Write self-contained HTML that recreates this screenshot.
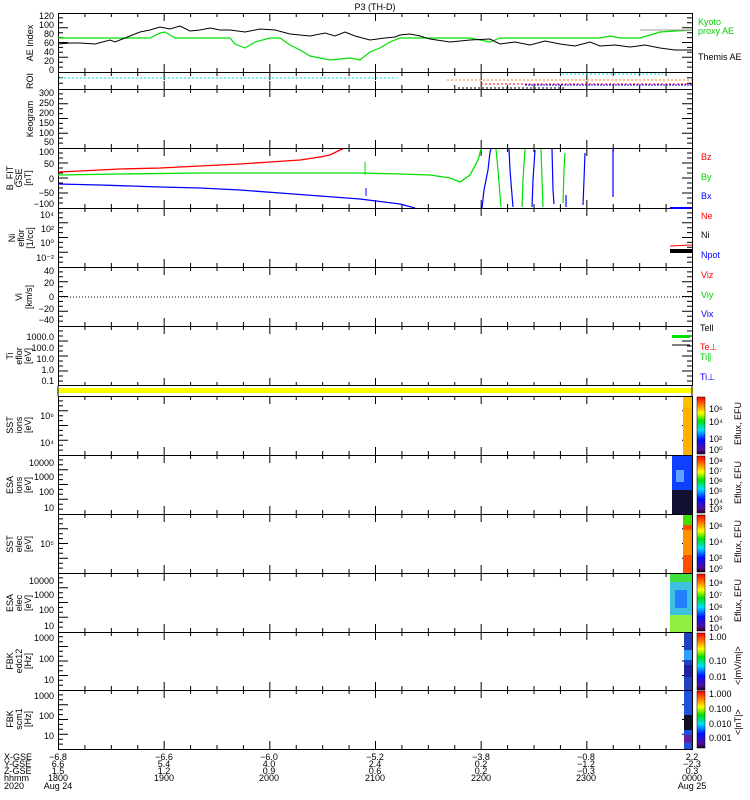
<!DOCTYPE html>
<html><head><meta charset="utf-8"><style>
html,body{margin:0;padding:0;background:#fff;width:750px;height:800px;overflow:hidden}
svg{display:block;font-family:"Liberation Sans",sans-serif}
text{font-size:9px}
</style></head><body>
<svg id="s" width="750" height="800" viewBox="0 0 750 800" xmlns="http://www.w3.org/2000/svg">
<defs>
<linearGradient id="cb" x1="0" y1="1" x2="0" y2="0">
<stop offset="0" stop-color="#200020"/><stop offset="0.08" stop-color="#5010a0"/><stop offset="0.25" stop-color="#0010ff"/><stop offset="0.42" stop-color="#00e0ff"/><stop offset="0.58" stop-color="#00e000"/><stop offset="0.72" stop-color="#ffff00"/><stop offset="0.85" stop-color="#ff8000"/><stop offset="1" stop-color="#ff0000"/>
</linearGradient>
</defs>
<text x="375" y="10" text-anchor="middle" font-size="10">P3 (TH-D)</text>
<g fill="none" stroke="#000" stroke-width="1" id="frames">
<rect x="58.5" y="13.5" width="634" height="59"/>
<rect x="58.5" y="72.5" width="634" height="17"/>
<rect x="58.5" y="89.5" width="634" height="59"/>
<rect x="58.5" y="148.5" width="634" height="60"/>
<rect x="58.5" y="208.5" width="634" height="59"/>
<rect x="58.5" y="267.5" width="634" height="59"/>
<rect x="58.5" y="326.5" width="634" height="59"/>
<rect x="58.5" y="396.5" width="634" height="59"/>
<rect x="58.5" y="455.5" width="634" height="59"/>
<rect x="58.5" y="514.5" width="634" height="59"/>
<rect x="58.5" y="573.5" width="634" height="59"/>
<rect x="58.5" y="632.5" width="634" height="58"/>
<rect x="58.5" y="690.5" width="634" height="59"/>
</g>
<rect x="58" y="388" width="635" height="5" fill="#ffff00"/>
<line x1="58" y1="386" x2="58" y2="396" stroke="#000"/><line x1="692" y1="386" x2="692" y2="396" stroke="#000"/>
<g id="ticks" stroke="#000"></g>
<!-- AE data -->
<polyline fill="none" stroke="#00e000" stroke-width="1.2" points="58,38 150,38 160,33 165,32 175,38 230,38 235,44 245,48 255,42 270,38 280,38 290,45 300,50 310,56 330,60 350,58 360,60 370,52 380,48 390,42 400,38 470,38 480,40 490,42 500,38 560,38 600,38 610,36 620,38 640,38 660,32 692,30"/>
<polyline fill="none" stroke="#000" stroke-width="1" points="58,44 70,43 80,43 95,44 110,40 115,42 125,38 140,32 150,30 160,27 170,29 180,26 190,31 200,30 210,28 220,30 230,30 245,32 260,29 275,30 290,34 300,35 310,36 325,33 335,36 345,32 355,36 370,40 385,38 395,37 400,35 410,34 420,36 430,39 450,42 470,40 490,39 500,44 515,42 530,45 545,41 560,44 575,46 590,42 600,46 615,45 630,47 645,45 660,48 675,50 692,50"/>
<polyline fill="none" stroke="#999" stroke-width="1" points="640,30 692,30"/>
<!-- ROI -->
<line x1="60" y1="78" x2="397" y2="78" stroke="#00e0e0" stroke-dasharray="2,2"/>
<line x1="562" y1="74" x2="663" y2="74" stroke="#00e0e0" stroke-dasharray="2,2"/>
<line x1="447" y1="80" x2="692" y2="80" stroke="#ff8000" stroke-dasharray="2,2"/>
<line x1="481" y1="84" x2="692" y2="84" stroke="#ff0000" stroke-dasharray="2,2"/>
<line x1="525" y1="85" x2="692" y2="85" stroke="#0000ff" stroke-dasharray="2,1"/>
<line x1="458" y1="88" x2="566" y2="88" stroke="#000" stroke-dasharray="2,2"/>
<!-- B field -->
<polyline fill="none" stroke="#ff0000" stroke-width="1.3" points="58,172 80,171 120,169 160,168 200,166 240,164 270,162 300,160 320,157 330,155 340,150 343,149"/>
<polyline fill="none" stroke="#00e000" stroke-width="1.3" points="58,175 120,174 200,173 280,173 360,173 400,174 430,175 450,178 460,182 470,175 478,160 481,149"/>
<line x1="365" y1="162" x2="365" y2="175" stroke="#00e000"/>
<polyline fill="none" stroke="#0000ff" stroke-width="1.3" points="58,184 100,185 160,187 200,188 240,190 280,193 320,196 360,199 400,204 415,208"/>
<line x1="366" y1="188" x2="366" y2="196" stroke="#0000ff"/>
<g stroke-width="1.2" fill="none">
<polyline stroke="#0000ff" points="482,208 484,190 488,170 490,152 491,149"/>
<polyline stroke="#00e000" points="496,149 498,170 500,195 501,207"/>
<polyline stroke="#0000ff" points="509,149 510,170 512,195 513,207"/>
<polyline stroke="#00e000" points="522,207 523,180 525,149"/>
<polyline stroke="#0000ff" points="532,207 533,180 535,150"/>
<polyline stroke="#00e000" points="541,149 542,180 543,207"/>
<polyline stroke="#0000ff" points="552,149 553,190 554,204"/>
<polyline stroke="#00e000" points="563,203 564,170 565,153"/>
<line x1="566" y1="195" x2="566" y2="207" stroke="#0000ff"/>
<polyline stroke="#0000ff" points="583,205 584,180 585,153"/>
<line x1="613" y1="149" x2="613" y2="197" stroke="#0000ff"/>
</g>
<line x1="670" y1="208" x2="692" y2="208" stroke="#0000ff" stroke-width="2"/>
<!-- N -->
<line x1="670" y1="246" x2="692" y2="245" stroke="#ff0000"/>
<rect x="670" y="249" width="22" height="4" fill="#000"/>
<!-- V zero -->
<line x1="58" y1="297" x2="692" y2="297" stroke="#000" stroke-dasharray="1,2"/>
<!-- T -->
<rect x="672" y="335" width="18" height="3" fill="#00e000"/>
<line x1="672" y1="345" x2="690" y2="345" stroke="#000"/>
<!-- spectrogram blocks -->
<rect x="683" y="397" width="9" height="58" fill="#ffb000"/>
<rect x="683" y="397" width="9" height="10" fill="#ffc000"/>
<rect x="672" y="456" width="20" height="58" fill="#1040ff"/>
<rect x="672" y="490" width="20" height="24" fill="#101030"/>
<rect x="676" y="470" width="8" height="12" fill="#60a0ff"/>
<rect x="683" y="515" width="9" height="58" fill="#ff5000"/>
<rect x="683" y="515" width="9" height="10" fill="#40e000"/>
<rect x="683" y="530" width="9" height="25" fill="#ff9000"/>
<rect x="670" y="574" width="22" height="58" fill="#40c0e0"/>
<rect x="670" y="574" width="22" height="8" fill="#40e040"/>
<rect x="670" y="615" width="22" height="17" fill="#90f040"/>
<rect x="675" y="590" width="12" height="18" fill="#2080ff"/>
<rect x="684" y="633" width="8" height="57" fill="#2040c0"/>
<rect x="684" y="650" width="8" height="10" fill="#30a0ff"/>
<rect x="684" y="665" width="8" height="12" fill="#2020a0"/>
<rect x="684" y="691" width="8" height="58" fill="#2050e0"/>
<rect x="684" y="715" width="8" height="15" fill="#101020"/>
<rect x="684" y="735" width="8" height="8" fill="#6020a0"/>
<!-- colorbars -->
<g stroke="#000" stroke-width="0.5">
<rect x="697" y="397" width="8" height="57" fill="url(#cb)"/>
<rect x="697" y="456" width="8" height="57" fill="url(#cb)"/>
<rect x="697" y="515" width="8" height="57" fill="url(#cb)"/>
<rect x="697" y="574" width="8" height="57" fill="url(#cb)"/>
<rect x="697" y="633" width="8" height="57" fill="url(#cb)"/>
<rect x="697" y="691" width="8" height="57" fill="url(#cb)"/>
</g>
<!-- right labels -->
<g font-size="8">
<text x="698" y="25" fill="#00d000">Kyoto</text><text x="698" y="34" fill="#00d000">proxy AE</text>
<text x="698" y="60">Themis AE</text>
<text x="701" y="160" fill="#f00">Bz</text><text x="701" y="180" fill="#00d000">By</text><text x="701" y="199" fill="#00f">Bx</text>
<text x="701" y="219" fill="#f00">Ne</text><text x="701" y="238">Ni</text><text x="701" y="258" fill="#00f">Npot</text>
<text x="701" y="278" fill="#f00">Viz</text><text x="701" y="298" fill="#00d000">Viy</text><text x="701" y="317" fill="#00f">Vix</text>
<text x="700" y="331">Tell</text><text x="700" y="350" fill="#f00">Te⊥</text><text x="700" y="360" fill="#00d000">Ti∥</text><text x="700" y="380" fill="#00f">Ti⊥</text>
<text x="709" y="412">10⁶</text><text x="709" y="425">10⁴</text><text x="709" y="442">10²</text><text x="709" y="453">10⁰</text>
<text x="709" y="464">10⁸</text><text x="709" y="474">10⁷</text><text x="709" y="484">10⁶</text><text x="709" y="494">10⁵</text><text x="709" y="505">10⁴</text><text x="709" y="512">10³</text>
<text x="709" y="529">10⁶</text><text x="709" y="545">10⁴</text><text x="709" y="561">10²</text><text x="709" y="572">10⁰</text>
<text x="709" y="586">10⁸</text><text x="709" y="598">10⁷</text><text x="709" y="610">10⁶</text><text x="709" y="622">10⁵</text><text x="709" y="631">10⁴</text>
<text x="709" y="640">1.00</text><text x="709" y="664">0.10</text><text x="709" y="680">0.01</text>
<text x="709" y="697">1.000</text><text x="709" y="712">0.100</text><text x="709" y="727">0.010</text><text x="709" y="741">0.001</text>
<text transform="translate(741,445) rotate(-90)">Eflux, EFU</text>
<text transform="translate(741,504) rotate(-90)">Eflux, EFU</text>
<text transform="translate(741,563) rotate(-90)">Eflux, EFU</text>
<text transform="translate(741,622) rotate(-90)">Eflux, EFU</text>
<text transform="translate(741,685) rotate(-90)">&lt;|mV/m|&gt;</text>
<text transform="translate(741,735) rotate(-90)">&lt;|nT|&gt;</text>
</g>
<!-- left labels -->
<g font-size="8" text-anchor="end">
<text x="54" y="19">120</text><text x="54" y="28">100</text><text x="54" y="37">80</text><text x="54" y="46">60</text><text x="54" y="55">40</text><text x="54" y="64">20</text><text x="54" y="73">0</text>
<text x="54" y="96">300</text><text x="54" y="106">250</text><text x="54" y="116">200</text><text x="54" y="126">150</text><text x="54" y="136">100</text><text x="54" y="145">50</text>
<text x="54" y="155">100</text><text x="54" y="167">50</text><text x="54" y="182">0</text><text x="54" y="196">−50</text><text x="54" y="207">−100</text>
<text x="54" y="218">10⁴</text><text x="54" y="232">10²</text><text x="54" y="246">10⁰</text><text x="54" y="261">10⁻²</text>
<text x="54" y="274">40</text><text x="54" y="286">20</text><text x="54" y="300">0</text><text x="54" y="312">−20</text><text x="54" y="323">−40</text>
<text x="54" y="340">1000.0</text><text x="54" y="351">100.0</text><text x="54" y="362">10.0</text><text x="54" y="373">1.0</text><text x="54" y="384">0.1</text>
<text x="54" y="419">10⁶</text><text x="54" y="446">10⁴</text>
<text x="54" y="466">10000</text><text x="54" y="480">1000</text><text x="54" y="495">100</text><text x="54" y="511">10</text>
<text x="54" y="547">10⁵</text>
<text x="54" y="584">10000</text><text x="54" y="598">1000</text><text x="54" y="613">100</text><text x="54" y="629">10</text>
<text x="54" y="641">1000</text><text x="54" y="662">100</text><text x="54" y="683">10</text>
<text x="54" y="699">1000</text><text x="54" y="719">100</text><text x="54" y="739">10</text>
</g>
<g font-size="8" text-anchor="middle">
<text transform="translate(33,43) rotate(-90)">AE Index</text>
<text transform="translate(33,81) rotate(-90)">ROI</text>
<text transform="translate(33,119) rotate(-90)">Keogram</text>
<text transform="translate(13,178) rotate(-90)">B_FIT</text><text transform="translate(22,178) rotate(-90)">GSE</text><text transform="translate(31,178) rotate(-90)">[nT]</text>
<text transform="translate(15,238) rotate(-90)">Ni</text><text transform="translate(24,238) rotate(-90)">eflor</text><text transform="translate(33,238) rotate(-90)">[1/cc]</text>
<text transform="translate(22,297) rotate(-90)">Vi</text><text transform="translate(32,297) rotate(-90)">[km/s]</text>
<text transform="translate(13,356) rotate(-90)">Ti</text><text transform="translate(22,356) rotate(-90)">eflor</text><text transform="translate(31,356) rotate(-90)">[eV]</text>
<text transform="translate(13,425) rotate(-90)">SST</text><text transform="translate(22,425) rotate(-90)">ions</text><text transform="translate(31,425) rotate(-90)">[eV]</text>
<text transform="translate(13,485) rotate(-90)">ESA</text><text transform="translate(22,485) rotate(-90)">ions</text><text transform="translate(31,485) rotate(-90)">[eV]</text>
<text transform="translate(13,544) rotate(-90)">SST</text><text transform="translate(22,544) rotate(-90)">elec</text><text transform="translate(31,544) rotate(-90)">[eV]</text>
<text transform="translate(13,603) rotate(-90)">ESA</text><text transform="translate(22,603) rotate(-90)">elec</text><text transform="translate(31,603) rotate(-90)">[eV]</text>
<text transform="translate(13,661) rotate(-90)">FBK</text><text transform="translate(22,661) rotate(-90)">edc12</text><text transform="translate(31,661) rotate(-90)">[Hz]</text>
<text transform="translate(13,719) rotate(-90)">FBK</text><text transform="translate(22,719) rotate(-90)">scm1</text><text transform="translate(31,719) rotate(-90)">[Hz]</text>
</g>
<!-- bottom axis labels -->
<g font-size="8">
<text x="4" y="760">X-GSE</text><text x="4" y="767">Y-GSE</text><text x="4" y="774">Z-GSE</text><text x="4" y="781">hhmm</text><text x="4" y="789">2020</text>
</g>
<g font-size="8" text-anchor="middle">
<text x="58" y="760">−6.8</text><text x="58" y="767">6.6</text><text x="58" y="774">1.5</text><text x="58" y="781">1800</text><text x="58" y="789">Aug 24</text>
<text x="164" y="760">−6.6</text><text x="164" y="767">5.4</text><text x="164" y="774">1.2</text><text x="164" y="781">1900</text>
<text x="269" y="760">−6.0</text><text x="269" y="767">4.0</text><text x="269" y="774">0.9</text><text x="269" y="781">2000</text>
<text x="375" y="760">−5.2</text><text x="375" y="767">2.4</text><text x="375" y="774">0.6</text><text x="375" y="781">2100</text>
<text x="481" y="760">−3.8</text><text x="481" y="767">0.2</text><text x="481" y="774">0.2</text><text x="481" y="781">2200</text>
<text x="586" y="760">−0.8</text><text x="586" y="767">−1.2</text><text x="586" y="774">−0.3</text><text x="586" y="781">2300</text>
<text x="692" y="760">2.2</text><text x="692" y="767">−2.3</text><text x="692" y="774">0.3</text><text x="692" y="781">0000</text><text x="692" y="789">Aug 25</text>
</g>
</svg>
<script>
(function(){
var g=document.getElementById('ticks'),ns='http://www.w3.org/2000/svg',d='';
var panels=[[13,72],[72,89],[89,148],[148,208],[208,267],[267,326],[326,386],[396,455],[455,514],[514,573],[573,632],[632,690],[690,749]];
panels.forEach(function(p){
 for(var i=0;i<=24;i++){var x=58+i*634/24+0.5;var L=(i%4==0)?8:4;
  d+='M'+x+' '+(p[0])+'v'+L+'M'+x+' '+(p[1])+'v-'+L;}
 var h=p[1]-p[0];var n=Math.max(2,Math.round(h/5));
 for(var j=1;j<n;j++){var y=(p[0]+j*h/n).toFixed(1);var L2=(j%3==0)?10:5;
  d+='M58 '+y+'h'+L2+'M692 '+y+'h-'+L2;}
});
var pa=document.createElementNS(ns,'path');pa.setAttribute('d',d);pa.setAttribute('stroke','#000');pa.setAttribute('fill','none');g.appendChild(pa);
})();
</script>
</body></html>
